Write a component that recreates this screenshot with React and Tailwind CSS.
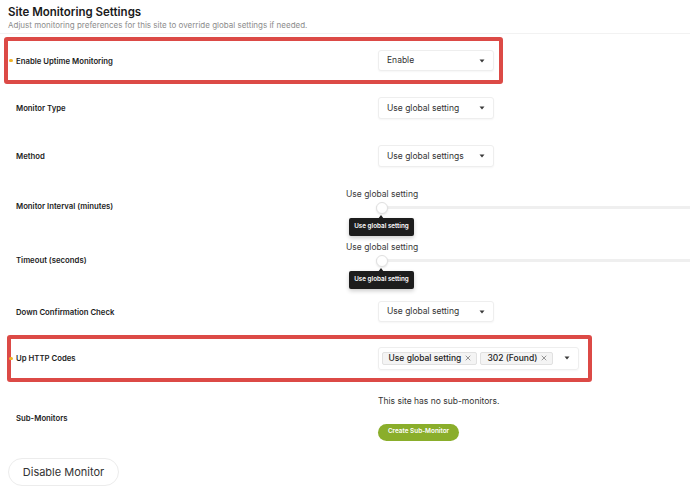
import React from "react";

function Caret() {
  return (
    <svg width="6" height="4" viewBox="0 0 6 4" className="shrink-0">
      <path d="M0.5 0.5 L5.5 0.5 L3 3.5 Z" fill="#3a3a3a" />
    </svg>
  );
}

function XIcon() {
  return (
    <svg width="6" height="6" viewBox="0 0 6 6" className="shrink-0">
      <path d="M1 1 L5 5 M5 1 L1 5" stroke="#8a8a8a" strokeWidth="0.9" strokeLinecap="round" />
    </svg>
  );
}

function Select({ value }) {
  return (
    <div className="w-[115.5px] h-[21.5px] border border-[#eeeeee] rounded-[3px] shadow-[0_1px_2px_rgba(0,0,0,0.04)] flex items-center justify-between pl-[8px] pr-[8px] text-[8.5px] text-[#333333] bg-white">
      <span>{value}</span>
      <Caret />
    </div>
  );
}

function Label({ children, dot }) {
  return (
    <div className="relative w-[362px] shrink-0 text-[7.75px] font-semibold text-[#1c1c1c] leading-[12px]">
      {dot && <span className="absolute left-[-7px] top-[4.25px] w-[3.5px] h-[3.5px] rounded-full bg-[#f0b429]" />}
      {children}
    </div>
  );
}

function Slider({ pt }) {
  return (
    <div className={"relative flex-1 self-stretch " + pt}>
      <div className="text-[8.5px] leading-[12px] text-[#3a3a3a]">Use global setting</div>
      <div className="relative h-[12px] mt-[1.5px]">
        <div className="absolute left-[30px] right-0 top-[4.5px] h-[3px] bg-[#efefef]" />
        <div className="absolute left-[30px] top-0 w-[12px] h-[12px] rounded-full bg-white border border-[#e0e0e0] shadow-[0_1px_2px_rgba(0,0,0,0.1)]" />
        <div className="absolute left-[3px] top-[16.5px] w-[65px] h-[18px] bg-[#1d1d1d] rounded-[2px] shadow-[0_2px_4px_rgba(0,0,0,0.2)] flex items-center justify-center text-[6.3px] font-semibold text-white">
          <span className="absolute top-[-3.5px] left-[29px] w-0 h-0 border-l-[3.5px] border-r-[3.5px] border-b-[4px] border-l-transparent border-r-transparent border-b-[#1d1d1d]" />
          Use global setting
        </div>
      </div>
    </div>
  );
}

function Tag({ children }) {
  return (
    <div className="h-[13.5px] flex items-center gap-[4px] pl-[6px] pr-[5px] bg-[#f4f4f4] border border-[#e1e1e1] rounded-[2px] text-[8.5px] font-medium text-[#222222]">
      <span>{children}</span>
      <XIcon />
    </div>
  );
}

export default function App() {
  return (
    <div className="w-[690px] h-[495px] overflow-hidden bg-white font-['Inter',sans-serif]">
      <div className="h-[34px] border-b border-[#f2f2f2] pl-2 pt-[5px]">
        <div className="text-[11.5px] font-semibold leading-[15px] text-[#1a1a1a]">Site Monitoring Settings</div>
        <div className="text-[8px] leading-[10px] text-[#8c8c8c]">
          Adjust monitoring preferences for this site to override global settings if needed.
        </div>
      </div>

      <div className="mt-[3px] ml-[3.5px] w-[499.5px] h-[47px] border-4 border-[#dc4a46] rounded-[3px] flex items-center pl-[8.5px]">
        <Label dot>Enable Uptime Monitoring</Label>
        <Select value="Enable" />
      </div>

      <div className="h-[48px] flex items-center pl-4">
        <Label>Monitor Type</Label>
        <Select value="Use global setting" />
      </div>

      <div className="h-[48px] flex items-center pl-4">
        <Label>Method</Label>
        <Select value="Use global settings" />
      </div>

      <div className="h-[52px] flex pl-4">
        <div className="w-[330px] shrink-0 self-center text-[7.75px] font-semibold text-[#1c1c1c] leading-[12px]">
          Monitor Interval (minutes)
        </div>
        <Slider pt="pt-[8px]" />
      </div>

      <div className="h-[56px] flex pl-4">
        <div className="w-[330px] shrink-0 self-center text-[7.75px] font-semibold text-[#1c1c1c] leading-[12px]">
          Timeout (seconds)
        </div>
        <Slider pt="pt-[9px]" />
      </div>

      <div className="h-[47px] flex items-center pl-4">
        <Label>Down Confirmation Check</Label>
        <Select value="Use global setting" />
      </div>

      <div className="ml-[6.5px] w-[585px] h-[46.5px] border-4 border-[#dc4a46] rounded-[3px] flex items-center pl-[5.5px]">
        <Label dot>Up HTTP Codes</Label>
        <div className="w-[201px] h-[23px] border border-[#eeeeee] rounded-[3px] shadow-[0_1px_2px_rgba(0,0,0,0.04)] flex items-center pl-[2.5px] pr-[8px] gap-[3px]">
          <Tag>Use global setting</Tag>
          <Tag>302 (Found)</Tag>
          <div className="flex-1" />
          <Caret />
        </div>
      </div>

      <div className="h-[72px] flex items-center pl-4">
        <Label>Sub-Monitors</Label>
        <div className="flex flex-col items-start">
          <div className="text-[8.5px] leading-[12px] text-[#333333]">This site has no sub-monitors.</div>
          <button className="mt-[17px] h-[17px] w-[81px] rounded-full bg-[#8aae2b] text-white text-[6.4px] font-semibold flex items-center justify-center">
            Create Sub-Monitor
          </button>
        </div>
      </div>

      <button className="mt-[4px] ml-2 h-[28.5px] w-[111px] rounded-full border border-[#ececec] bg-white text-[11px] text-[#333333] flex items-center justify-center">
        Disable Monitor
      </button>
    </div>
  );
}
